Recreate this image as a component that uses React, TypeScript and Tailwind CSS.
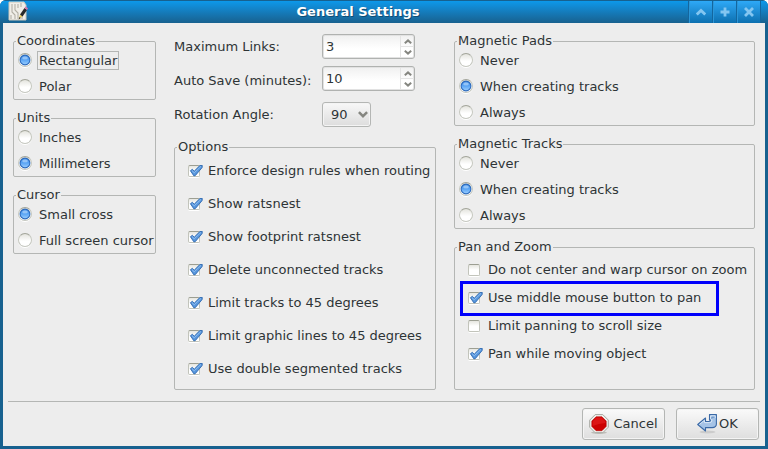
import { useState } from "react";
import type { ReactNode } from "react";

function Group({ title, className = "", children }: { title: string; className?: string; children: ReactNode }) {
  return (
    <fieldset className={`min-w-0 rounded-[2px] border border-[#b4b6b4] ${className}`}>
      <legend className="ml-[2px] h-3 px-px text-[13px] leading-3 whitespace-nowrap">{title}</legend>
      {children}
    </fieldset>
  );
}

function RadioMark() {
  return (
    <svg viewBox="0 0 14 14" aria-hidden="true" className="pointer-events-none col-start-1 row-start-1 hidden size-[14px] peer-checked:block">
      <defs>
        <linearGradient id="radioFill" x1="0" y1="0" x2="0" y2="1">
          <stop offset="0" stopColor="#4f95e6" />
          <stop offset="0.45" stopColor="#55a1f3" />
          <stop offset="1" stopColor="#9ccfff" />
        </linearGradient>
      </defs>
      <circle cx="7" cy="7" r="4.9" fill="url(#radioFill)" stroke="#2a68bb" strokeWidth="1.1" />
      <ellipse cx="7" cy="5" rx="2.8" ry="1.6" fill="#a9d0fa" opacity="0.75" />
    </svg>
  );
}

function RadioGroup({ title, name, options, initial, focused }: { title: string; name: string; options: string[]; initial: string; focused?: string }) {
  return (
    <Group title={title}>
      {options.map((option) => (
        <label key={option} className="flex h-[26px] items-center gap-[5px] pl-1">
          <span className="grid shrink-0">
            <input
              type="radio"
              name={name}
              defaultChecked={option === initial}
              className="peer col-start-1 row-start-1 size-[14px] appearance-none rounded-full border border-[#c6c8c0] border-t-[#a3a59a] bg-linear-to-b from-[#e4e4de] to-white to-60% shadow-[0_1px_0_#ffffff]"
            />
            <RadioMark />
          </span>
          <span className={`mt-px border px-px leading-[17px] whitespace-nowrap ${option === focused ? "border-[#b4b6b4]" : "border-transparent"}`}>{option}</span>
        </label>
      ))}
    </Group>
  );
}

function Check({ label, checked = false, highlighted = false, className }: { label: string; checked?: boolean; highlighted?: boolean; className: string }) {
  return (
    <label className={`relative flex items-center gap-2 pl-[13px] ${className}`}>
      <span className="grid shrink-0">
        <input
          type="checkbox"
          defaultChecked={checked}
          className="peer col-start-1 row-start-1 size-3 appearance-none rounded-[2px] border border-[#c2c4bb] border-t-[#9c9e92] bg-linear-to-b from-[#e6e6e0] to-white to-50% shadow-[0_1px_0_#ffffff]"
        />
        <svg viewBox="0 0 12 12" aria-hidden="true" className="pointer-events-none col-start-1 row-start-1 hidden size-3 overflow-visible peer-checked:block">
          <path d="M2.4 5.7 L4.4 4.3 L6.2 6.2 L11.9 0.5 L14.3 0.5 L14.1 2.6 L7.2 10.7 L5.8 10.8 Z" fill="#5796dc" stroke="#2f69b0" strokeWidth="0.9" strokeLinejoin="round" />
          <path d="M3.9 5.6 L6.2 7.8 L13 1.4" fill="none" stroke="#94c2f3" strokeWidth="0.9" />
        </svg>
      </span>
      <span className="whitespace-nowrap">{label}</span>
      {highlighted && <span aria-hidden="true" className="absolute -top-[3px] left-[5px] h-[35px] w-[259px] border-3 border-[#0000fb]" />}
    </label>
  );
}

function Arrow({ up = false }: { up?: boolean }) {
  return (
    <svg viewBox="0 0 8 5" aria-hidden="true" className={`h-[5px] w-2 ${up ? "rotate-180" : ""}`}>
      <path d="M0.8 0.8 L4 3.6 L7.2 0.8" fill="none" stroke="#858680" strokeWidth="2" />
    </svg>
  );
}

function Spin({ id, initial }: { id: string; initial: number }) {
  const [value, setValue] = useState(initial);
  return (
    <div className="flex h-[25px] w-[93px] overflow-hidden rounded-[3px] border border-[#b0b2b0] bg-linear-to-b from-[#f0f0f0] to-white to-60% shadow-[inset_0_0_0_1px_#e2e2e2]">
      <input
        id={id}
        type="text"
        inputMode="numeric"
        value={value}
        onChange={(e) => setValue(Number(e.target.value) || 0)}
        className="w-0 flex-1 bg-transparent pl-[3px] outline-none"
      />
      <div className="my-px flex w-[14px] flex-col border-l border-[#e4e4e4]">
        <button type="button" aria-label="Increase" onClick={() => setValue(value + 1)} className="flex flex-1 items-center justify-center border-b border-[#e4e4e4]">
          <Arrow up />
        </button>
        <button type="button" aria-label="Decrease" onClick={() => setValue(value - 1)} className="flex flex-1 items-center justify-center">
          <Arrow />
        </button>
      </div>
    </div>
  );
}

function WindowButton({ label, children }: { label: string; children: ReactNode }) {
  return (
    <button type="button" aria-label={label} className="flex w-6 items-center justify-center border-r border-[#14669e] bg-linear-to-b from-[#2ea9f7] to-[#0c70b0] shadow-[inset_1px_0_0_#2a96d8]">
      <svg viewBox="0 0 10 10" aria-hidden="true" className="size-[10px]" fill="none" stroke="#83c6f1" strokeWidth="2.8">
        {children}
      </svg>
    </button>
  );
}

function AppIcon() {
  return (
    <svg viewBox="0 0 20 20" aria-hidden="true" className="size-5">
      <path d="M1 1 H16 L18 4 V19 H1 Z" fill="#f0eee8" stroke="#c9c6ba" />
      <path d="M4 3 V11 L7 14 V18 M7 3 V9 L10 12 V18 M10 3 V7 M13 2 V6 M3 14 V18 M14 15 V18" fill="none" stroke="#b3b0a5" strokeWidth="1.1" />
      <path d="M11 17.5 L12 13.5 L14.5 15.5 Z" fill="#ead05c" />
      <path d="M12 13.5 L16.5 7 L19 9 L14.5 15.5 Z" fill="#282a2a" />
      <path d="M16.5 7 L17.5 5.4 L20 7.3 L19 9 Z" fill="#d777ac" />
      <path d="M10.6 18.4 L11.5 16 L12.8 17 Z" fill="#3b3525" />
    </svg>
  );
}

const actionButton =
  "flex h-8 w-[83px] items-center justify-center rounded-[3px] border border-[#b4b6b4] bg-linear-to-b from-[#fafafa] to-[#dedede] shadow-[inset_0_0_0_1px_#f4f4f4]";

const routingOptions = [
  "Enforce design rules when routing",
  "Show ratsnest",
  "Show footprint ratsnest",
  "Delete unconnected tracks",
  "Limit tracks to 45 degrees",
  "Limit graphic lines to 45 degrees",
  "Use double segmented tracks",
];

const magneticChoices = ["Never", "When creating tracks", "Always"];

export default function App() {
  return (
    <div className="bg-white font-['DejaVu_Sans',sans-serif] text-[13px] leading-4 text-[#2e3436]">
      <div className="overflow-hidden rounded-t-[6px] bg-[#17618f]">
        <header className="flex h-[23px] border-t border-[#17618f] bg-linear-to-b from-[#0c98ea] to-[#17618f] pr-[7px] pl-2">
          <AppIcon />
          <h1 className="flex-1 pt-[3px] text-center text-[13px] leading-4 font-bold text-white [text-shadow:1px_1px_0_#0f4d75]">General Settings</h1>
          <div className="flex border-l border-[#14669e]">
            <WindowButton label="Shade">
              <path d="M0.8 7.5 L5 3.5 L9.2 7.5" />
            </WindowButton>
            <WindowButton label="Maximize">
              <path d="M5 0.5 V9.5 M0.5 5 H9.5" />
            </WindowButton>
            <WindowButton label="Close">
              <path d="M1 1 L9 9 M9 1 L1 9" />
            </WindowButton>
          </div>
        </header>
        <form className="mx-[3px] mb-[3px] bg-[#ededed] pb-[6px]" onSubmit={(e) => e.preventDefault()}>
          <div className="grid grid-cols-[minmax(0,143fr)_minmax(0,262fr)_minmax(0,301fr)] gap-[18px] px-[10px] pt-[11px] pb-[11px]">
            <div className="flex flex-col gap-3 pt-px">
              <RadioGroup title="Coordinates" name="coordinates" options={["Rectangular", "Polar"]} initial="Rectangular" focused="Rectangular" />
              <RadioGroup title="Units" name="units" options={["Inches", "Millimeters"]} initial="Millimeters" />
              <RadioGroup title="Cursor" name="cursor" options={["Small cross", "Full screen cursor"]} initial="Small cross" />
            </div>

            <div className="flex flex-col">
              <div className="mb-[14px] grid grid-cols-[148px_1fr] items-center gap-y-[7px]">
                <label htmlFor="max-links">Maximum Links:</label>
                <Spin id="max-links" initial={3} />
                <label htmlFor="auto-save" className="pt-1">Auto Save (minutes):</label>
                <Spin id="auto-save" initial={10} />
                <label htmlFor="rotation" className="pt-1">Rotation Angle:</label>
                <div className="grid w-[49px] items-center pt-1">
                  <select
                    id="rotation"
                    defaultValue="90"
                    className="col-start-1 row-start-1 h-[25px] appearance-none rounded-[3px] border border-[#b4b6b4] bg-linear-to-b from-[#f8f8f8] to-[#dddddd] pl-2 shadow-[inset_0_0_0_1px_#f4f4f4]"
                  >
                    <option>45</option>
                    <option>90</option>
                  </select>
                  <svg viewBox="0 0 10 7" aria-hidden="true" className="pointer-events-none col-start-1 row-start-1 mr-[3px] h-[7px] w-[10px] justify-self-end">
                    <path d="M0.9 1.2 L5 5.2 L9.1 1.2" fill="none" stroke="#858680" strokeWidth="2.5" />
                  </svg>
                </div>
              </div>
              <Group title="Options" className="pt-px pb-1">
                {routingOptions.map((option) => (
                  <Check key={option} label={option} checked className="h-[33px]" />
                ))}
              </Group>
            </div>

            <div className="flex flex-col gap-3 pt-px">
              <RadioGroup title="Magnetic Pads" name="pads" options={magneticChoices} initial="When creating tracks" />
              <RadioGroup title="Magnetic Tracks" name="tracks" options={magneticChoices} initial="When creating tracks" />
              <Group title="Pan and Zoom" className="flex-1 pt-[3px]">
                <Check label="Do not center and warp cursor on zoom" className="h-7" />
                <Check label="Use middle mouse button to pan" checked highlighted className="h-7" />
                <Check label="Limit panning to scroll size" className="h-7" />
                <Check label="Pan while moving object" checked className="h-7" />
              </Group>
            </div>
          </div>

          <hr className="mx-[5px] border-[#b4b6b4]" />

          <div className="flex justify-end gap-[11px] px-[6px] pt-[6px]">
            <button type="button" className={`${actionButton} gap-1`}>
              <svg viewBox="0 0 20 20" aria-hidden="true" className="size-5">
                <ellipse cx="10" cy="18.6" rx="8" ry="1.3" fill="#bdbdb8" />
                <path d="M6.2 0.6 H13.8 L19.3 6.1 V13.2 L13.8 18.7 H6.2 L0.7 13.2 V6.1 Z" fill="#f1f1ed" stroke="#a5a7a0" />
                <path d="M7.1 2.8 H12.9 L17.2 7.1 V12.4 L12.9 16.7 H7.1 L2.8 12.4 V7.1 Z" fill="#cc0202" stroke="#b40000" strokeWidth="0.6" />
                <path d="M7.3 3.6 H12.7 L16.4 7.4 V9 Q10 9.5 3.6 12 V7.4 Z" fill="#dc1515" />
              </svg>
              Cancel
            </button>
            <button type="submit" className={`${actionButton} gap-[2px]`}>
              <svg viewBox="0 0 20 20" aria-hidden="true" className="size-5">
                <ellipse cx="10.5" cy="18" rx="8" ry="1.5" fill="#cccccc" />
                <path d="M12.5 0.6 H19.4 V10 Q19.4 13.6 15 13.6 H8.5 V17 L0.7 10.5 L8.5 4 V7.5 H12 Q13.6 7.5 13.6 6 H12.5 Z" fill="#a5c3e6" stroke="#3a69a6" strokeWidth="1.1" strokeLinejoin="round" />
                <path d="M2.5 10.4 L7.5 6.3 V8.6 H12.5 Q14.8 8.6 14.8 7 V4.8 H13.6 V1.8 H18.2 V4.2" fill="none" stroke="#d8e6f6" />
                <path d="M14.8 5 V3.2 H17.6" fill="none" stroke="#5583bb" strokeWidth="0.8" />
              </svg>
              OK
            </button>
          </div>
        </form>
      </div>
    </div>
  );
}
